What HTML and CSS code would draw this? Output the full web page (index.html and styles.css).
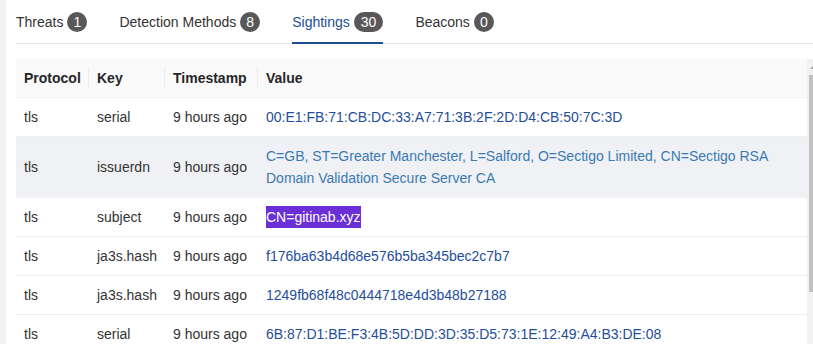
FILE: index.html
```html
<!DOCTYPE html>
<html>
<head>
<meta charset="utf-8">
<link rel="stylesheet" href="styles.css">
</head>
<body>
<div class="page">
  <div class="strip"></div>
  <div class="main">
    <div class="tabs">
      <div class="tab">Threats <span class="badge">1</span></div>
      <div class="tab">Detection Methods <span class="badge">8</span></div>
      <div class="tab active">Sightings <span class="badge">30</span></div>
      <div class="tab">Beacons <span class="badge">0</span></div>
    </div>
    <div class="table-wrap">
      <table class="grid">
        <colgroup>
          <col class="c1"><col class="c2"><col class="c3"><col>
        </colgroup>
        <thead>
          <tr><th class="sep">Protocol</th><th class="sep">Key</th><th class="sep">Timestamp</th><th>Value</th></tr>
        </thead>
        <tbody>
          <tr><td>tls</td><td>serial</td><td>9 hours ago</td><td class="val">00:E1:FB:71:CB:DC:33:A7:71:3B:2F:2D:D4:CB:50:7C:3D</td></tr>
          <tr class="hover"><td>tls</td><td>issuerdn</td><td>9 hours ago</td><td class="val light">C=GB, ST=Greater Manchester, L=Salford, O=Sectigo Limited, CN=Sectigo RSA Domain Validation Secure Server CA</td></tr>
          <tr><td>tls</td><td>subject</td><td>9 hours ago</td><td class="val"><span class="mark">CN=gitinab.xyz</span></td></tr>
          <tr><td>tls</td><td>ja3s.hash</td><td>9 hours ago</td><td class="val">f176ba63b4d68e576b5ba345bec2c7b7</td></tr>
          <tr><td>tls</td><td>ja3s.hash</td><td>9 hours ago</td><td class="val">1249fb68f48c0444718e4d3b48b27188</td></tr>
          <tr><td>tls</td><td>serial</td><td>9 hours ago</td><td class="val">6B:87:D1:BE:F3:4B:5D:DD:3D:35:D5:73:1E:12:49:A4:B3:DE:08</td></tr>
        </tbody>
      </table>
      <div class="scrollbar">
        <div class="arrow-box"><span class="arrow"></span></div>
        <div class="thumb"></div>
      </div>
    </div>
  </div>
</div>
</body>
</html>
```

FILE: styles.css
```css
html, body {
  margin: 0;
  padding: 0;
  background: #fff;
  font-family: "Liberation Sans", Arial, sans-serif;
  font-size: 14px;
  color: #333;
}
.page {
  display: flex;
  width: 813px;
  height: 344px;
  overflow: hidden;
}
.strip {
  width: 6px;
  flex: none;
  background: #f2f2f2;
}
.main {
  flex: 1;
  padding-left: 10px;
  min-width: 0;
}
.tabs {
  display: flex;
  gap: 32px;
  height: 44px;
  box-sizing: border-box;
  border-bottom: 1px solid #e8e8e8;
}
.tab {
  display: flex;
  align-items: center;
  gap: 4px;
  height: 43px;
  color: #333;
  white-space: nowrap;
}
.tab.active {
  color: #1d4e94;
  height: 44px;
  margin-bottom: -1px;
  box-sizing: border-box;
  box-shadow: inset 0 -2px 0 #1d4e94;
  padding-bottom: 1px;
}
.badge {
  display: inline-block;
  min-width: 20px;
  height: 20px;
  line-height: 20px;
  padding: 0 7px;
  box-sizing: border-box;
  border-radius: 10px;
  background: #5a575a;
  color: #fff;
  text-align: center;
  font-size: 14px;
}
.tab:first-child .badge, .tab:nth-child(2) .badge, .tab:nth-child(4) .badge {
  padding: 0 6px;
}
.table-wrap {
  display: flex;
  margin-top: 15px;
}
.grid {
  width: 791px;
  flex: none;
  table-layout: fixed;
  border-collapse: collapse;
}
.c1 { width: 73px; }
.c2 { width: 76px; }
.c3 { width: 93px; }
.grid th, .grid td {
  padding: 8px;
  line-height: 22px;
  text-align: left;
  vertical-align: middle;
  border-bottom: 1px solid #f0f0f0;
}
.grid th {
  background: #fafafa;
  font-weight: bold;
  color: #262626;
  position: relative;
  white-space: nowrap;
}
.grid th.sep::after {
  content: "";
  position: absolute;
  right: 0;
  top: 50%;
  width: 1px;
  height: 22px;
  margin-top: -11px;
  background: #ececec;
}
.grid td {
  color: #333;
}
.grid tr.hover td {
  background: #f0f1f4;
}
.grid td.val {
  color: #1f4e9a;
}
.grid td.val.light {
  color: #3a79b3;
}
.mark {
  display: inline-block;
  background: #6a2fd7;
  color: #fff;
  line-height: 22px;
}
.scrollbar {
  width: 6px;
  flex: none;
  background: #f1f1f1;
  display: flex;
  flex-direction: column;
  height: 290px;
}
.arrow-box {
  height: 16px;
  display: flex;
  align-items: center;
  padding-left: 3px;
}
.arrow {
  width: 0;
  height: 0;
  border-left: 3px solid transparent;
  border-right: 3px solid transparent;
  border-bottom: 3px solid #a3a3a3;
}
.thumb {
  height: 217px;
  margin-left: 2px;
  background: #c1c1c1;
}
```
